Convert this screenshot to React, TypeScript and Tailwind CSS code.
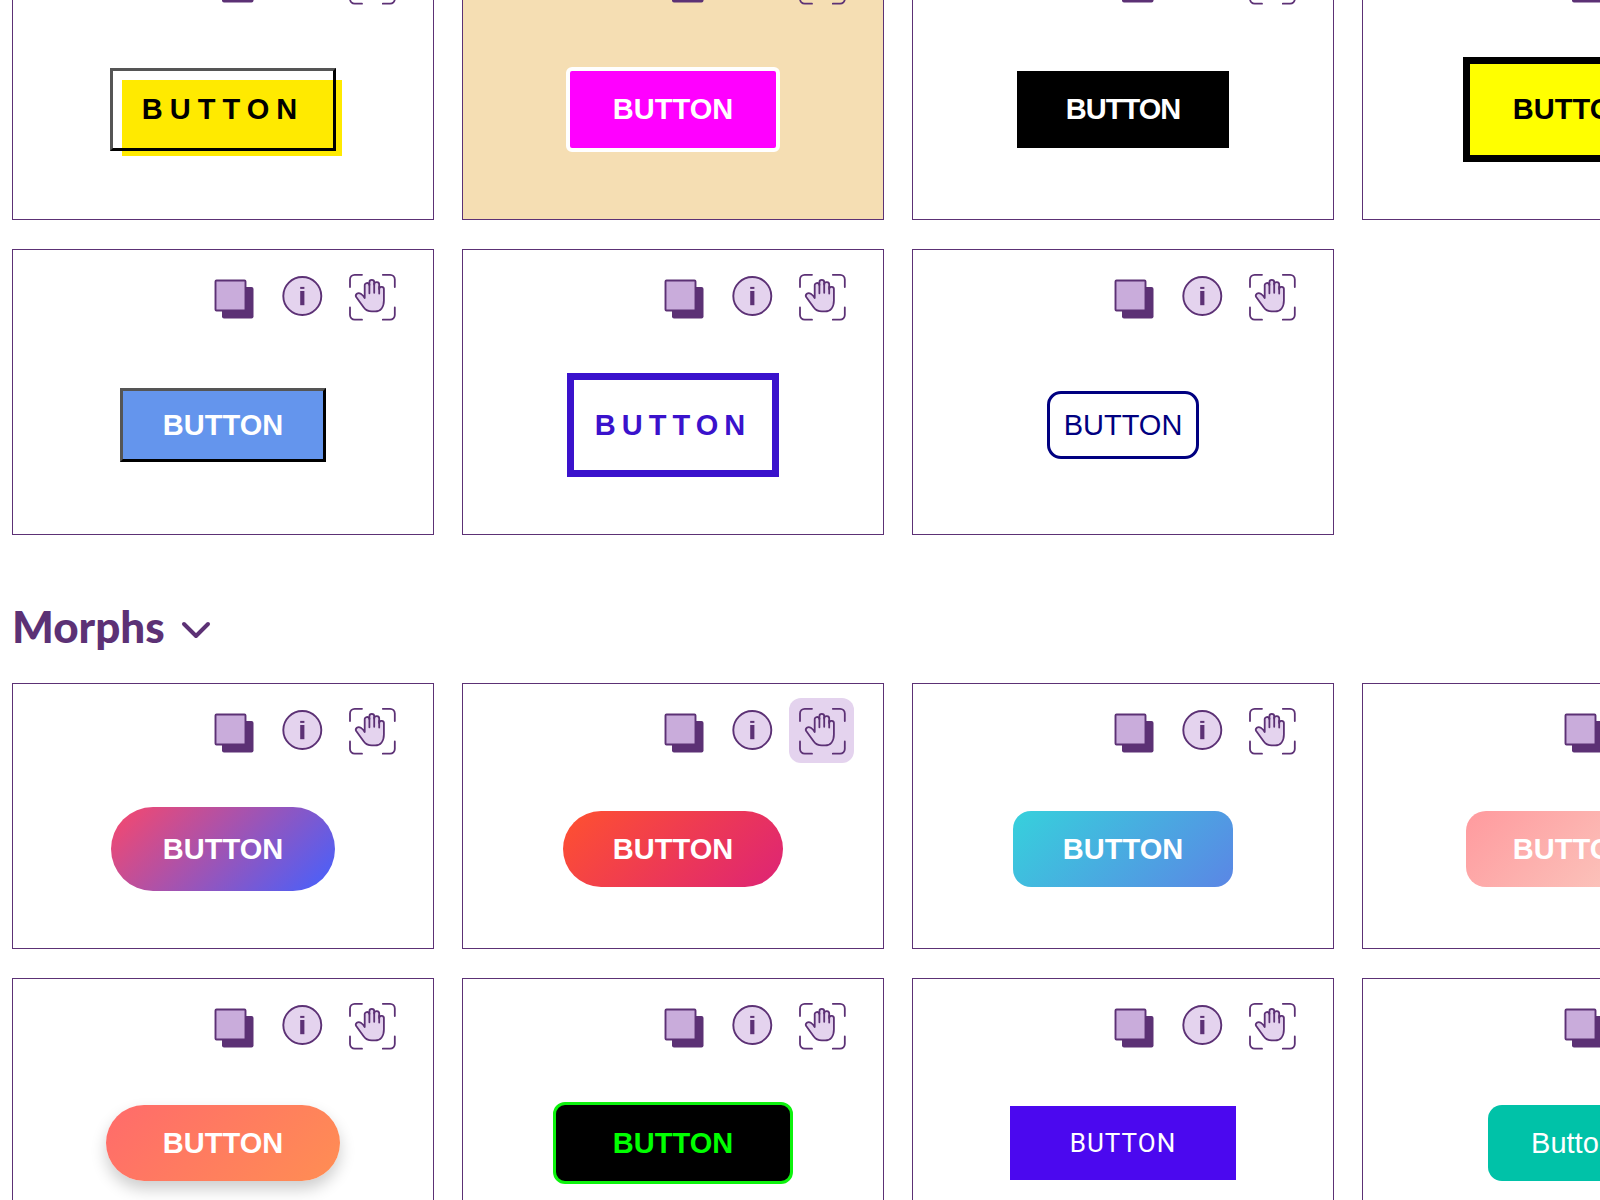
import { ReactNode } from "react";
import clsx from "clsx";

type Sample = {
  id: string;
  label: string;
  className: string;
  textSize?: string;
  cardClassName?: string;
  tryActive?: boolean;
  backdrop?: ReactNode;
};

const outlined: Sample[] = [
  {
    id: "offset",
    label: "BUTTON",
    className:
      "relative border-3 border-t-[#555] border-l-[#555] border-r-black border-b-black px-[29px] pt-[22px] pb-[23px] font-bold tracking-[7px] text-black",
    backdrop: (
      <span className="absolute -z-10 left-[9px] top-[9px] -right-[9px] -bottom-[8px] bg-[#ffea00]" />
    ),
  },
  {
    id: "magenta",
    label: "BUTTON",
    className:
      "rounded-md border-4 border-white bg-[#ff00ff] px-[43px] pt-[22px] pb-[23px] font-bold text-white",
    cardClassName: "bg-[#f5deb3]",
  },
  {
    id: "black",
    label: "BUTTON",
    className:
      "bg-black px-[49px] pt-[22px] pb-[23px] font-bold tracking-[-1px] text-white",
  },
  {
    id: "warning",
    label: "BUTTON",
    className:
      "border-7 border-black bg-[#ffff00] px-[43px] pt-[29px] pb-[30px] font-bold text-black",
  },
  {
    id: "cornflower",
    label: "BUTTON",
    className:
      "border-3 border-t-[#555] border-l-[#555] border-r-black border-b-black bg-[#6495ed] px-10 py-[18px] font-bold text-white",
  },
  {
    id: "frame",
    label: "BUTTON",
    className:
      "border-7 border-[#3a12cc] px-[21px] py-[29px] font-bold tracking-[6px] text-[#3a12cc]",
  },
  {
    id: "navy",
    label: "BUTTON",
    className:
      "rounded-[14px] border-3 border-[#000080] px-[14px] py-[15px] text-[#000080]",
  },
];

const morphs: Sample[] = [
  {
    id: "sunset",
    label: "BUTTON",
    className:
      "rounded-full bg-[linear-gradient(135deg,#f9476b,#4361ff)] px-[52px] py-[26px] font-bold text-white",
  },
  {
    id: "ember",
    label: "BUTTON",
    className:
      "rounded-full bg-[linear-gradient(135deg,#ff512f,#dd2476)] px-[50px] py-[22px] font-bold text-white",
    tryActive: true,
  },
  {
    id: "lagoon",
    label: "BUTTON",
    className:
      "rounded-[18px] bg-[linear-gradient(135deg,#36d1dc,#5b86e5)] px-[50px] py-[22px] font-bold text-white",
  },
  {
    id: "blush",
    label: "BUTTON",
    className:
      "rounded-[20px] bg-[linear-gradient(135deg,#ff9a9e,#fad0c4)] px-[47px] py-[22px] font-bold text-white",
  },
  {
    id: "coral",
    label: "BUTTON",
    className:
      "rounded-full bg-[linear-gradient(135deg,#ff6b6b,#ff8e53)] px-[57px] py-[22px] font-bold text-white shadow-[0_8px_16px_rgba(0,0,0,0.2)]",
  },
  {
    id: "terminal",
    label: "BUTTON",
    className:
      "rounded-xl border-3 border-[#0df20d] bg-black px-[57px] py-[22px] font-bold text-[#00ff00]",
  },
  {
    id: "violet",
    label: "BUTTON",
    textSize: "text-[26px]",
    className:
      "bg-[#4b08ef] px-[60px] py-[21px] font-['Roboto',sans-serif] tracking-[1px] text-white",
  },
  {
    id: "teal",
    label: "Button",
    className: "rounded-[14px] bg-[#00c2a8] px-[43px] py-[22px] text-white",
  },
];

function CopyIcon() {
  return (
    <svg viewBox="0 0 65 65" className="size-full" aria-hidden="true">
      <rect x="21" y="23" width="31.5" height="31.5" rx="2" fill="#5c3175" />
      <rect
        x="14.5"
        y="16.500"
        width="30"
        height="30"
        rx="1"
        fill="#c9acdb"
        stroke="#5c3175"
        strokeWidth="1.9"
      />
    </svg>
  );
}

function InfoIcon() {
  return (
    <svg viewBox="0 0 65 65" className="size-full" aria-hidden="true">
      <circle cx="32.3" cy="32" r="19" fill="#e4d3ee" stroke="#5c3175" strokeWidth="1.9" />
      <rect x="30.2" y="22.9" width="4.2" height="2" fill="#5c3175" />
      <rect x="30.2" y="27" width="4.2" height="14.2" fill="#5c3175" />
    </svg>
  );
}

function TryIcon() {
  return (
    <svg
      viewBox="0 0 65 65"
      className="size-full"
      fill="none"
      stroke="#5c3175"
      strokeWidth="1.8"
      strokeLinecap="round"
      strokeLinejoin="round"
      aria-hidden="true"
    >
      <path d="M11 23v-7.500a4.700 4.700 0 0 1 4.700-4.700h7.300M43.800 10.800h7.300a4.700 4.700 0 0 1 4.700 4.700v7.500M55.800 43.500v7.500a4.700 4.700 0 0 1-4.700 4.700h-7.300M23 55.700h-7.300a4.700 4.700 0 0 1-4.700-4.700v-7.500" />
      <path
        d="M25.700 34V21.800a2.350 2.350 0 0 1 4.700-.8V18.200a2.400 2.400 0 0 1 4.800 0v2.200a2.500 2.500 0 0 1 5 .4v4.200a2.350 2.350 0 0 1 4.700.4V36.500c0 7-3.600 10.900-8.800 10.900h-3.300c-4 0-6.300-1.500-8.200-4.200l-7.400-10.200c-1.500-2.700 1.700-5 4.600-3.200 1.600 1 2.900 2.500 3.900 4.200z"
        fill="#e4d3ee"
      />
      <path d="M30.400 20.500v8.800M35.200 19.500v9.300M40.200 23v6.500" />
    </svg>
  );
}

function SampleCard({ sample }: { sample: Sample }) {
  return (
    <article
      className={clsx(
        "isolate flex flex-col border border-[#5c3175] pt-[14px] pb-[57px]",
        sample.cardClassName,
      )}
    >
      <div className="flex justify-end gap-1 pr-[29px]">
        <button type="button" aria-label="Copy" className="size-[65px]">
          <CopyIcon />
        </button>
        <button type="button" aria-label="Info" className="size-[65px]">
          <InfoIcon />
        </button>
        <button
          type="button"
          aria-label="Try"
          className={clsx("size-[65px] rounded-xl", sample.tryActive && "bg-[#e4d3ee]")}
        >
          <TryIcon />
        </button>
      </div>
      <div className="mt-11 flex flex-1 items-center justify-center">
        <button
          type="button"
          className={clsx(
            "leading-8 whitespace-nowrap",
            sample.textSize ?? "text-[29px]",
            sample.className,
          )}
        >
          {sample.backdrop}
          {sample.label}
        </button>
      </div>
    </article>
  );
}

function SampleGrid({ samples }: { samples: Sample[] }) {
  return (
    <div className="grid w-[calc(111vw-4px)] grid-cols-4 gap-x-7 gap-y-[29px]">
      {samples.map((sample) => (
        <SampleCard key={sample.id} sample={sample} />
      ))}
    </div>
  );
}

export default function App() {
  return (
    <main className="h-screen overflow-hidden bg-white px-3 font-['Liberation_Sans',Arial,sans-serif]">
      {/* Scrolled part way down the gallery */}
      <div className="-mt-[67px]">
        <SampleGrid samples={outlined} />

        <h2 className="mt-[63px] mb-[29px]">
          <button
            type="button"
            className="flex items-center gap-4 font-['Lato',sans-serif] text-[44px] leading-14 font-black text-[#5c3175]"
          >
            Morphs
            <svg viewBox="0 0 30 20" className="mt-2 h-5 w-[30px]" fill="none" aria-hidden="true">
              <path
                d="M3 4l12 12 12-12"
                stroke="#5c3175"
                strokeWidth="4"
                strokeLinecap="round"
                strokeLinejoin="round"
              />
            </svg>
          </button>
        </h2>

        <SampleGrid samples={morphs} />
      </div>
    </main>
  );
}
